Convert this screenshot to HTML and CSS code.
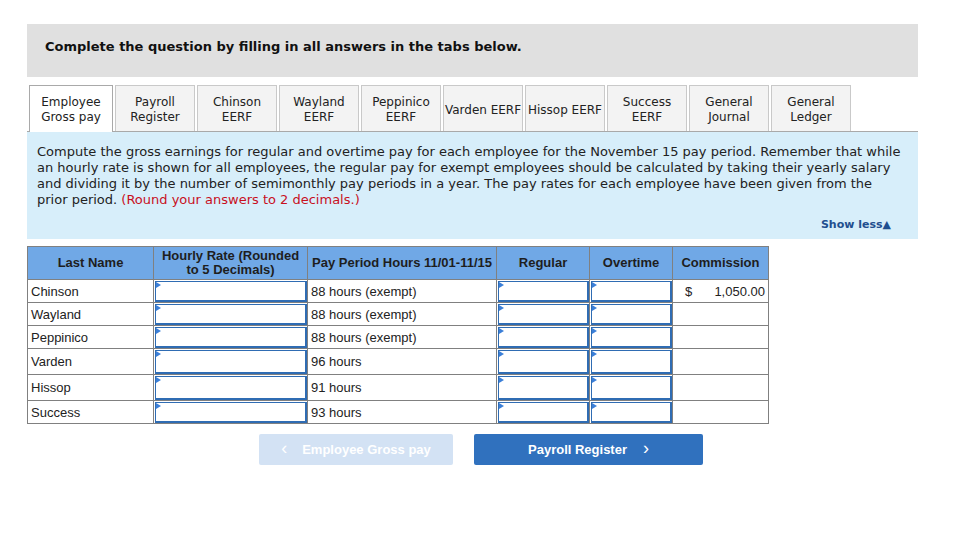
FILE: index.html
```html
<!DOCTYPE html>
<html>
<head>
<meta charset="utf-8">
<link rel="stylesheet" href="styles.css">
</head>
<body>
<div class="page">
  <div class="banner">Complete the question by filling in all answers in the tabs below.</div>

  <div class="tabs">
    <div class="tab active first">Employee<br>Gross pay</div>
    <div class="tab">Payroll<br>Register</div>
    <div class="tab">Chinson<br>EERF</div>
    <div class="tab">Wayland<br>EERF</div>
    <div class="tab">Peppinico<br>EERF</div>
    <div class="tab">Varden EERF</div>
    <div class="tab">Hissop EERF</div>
    <div class="tab">Success<br>EERF</div>
    <div class="tab">General<br>Journal</div>
    <div class="tab">General<br>Ledger</div>
  </div>

  <div class="panel">
    <p class="instr">Compute the gross earnings for regular and overtime pay for each employee for the November 15 pay period. Remember that while an hourly rate is shown for all employees, the regular pay for exempt employees should be calculated by taking their yearly salary and dividing it by the number of semimonthly pay periods in a year. The pay rates for each employee have been given from the prior period. <span class="red">(Round your answers to 2 decimals.)</span></p>
    <div class="showless">Show less&#9650;</div>
  </div>

  <table class="grid">
    <colgroup>
      <col class="c1"><col class="c2"><col class="c3"><col class="c4"><col class="c5"><col class="c6">
    </colgroup>
    <thead>
      <tr>
        <th>Last Name</th>
        <th>Hourly Rate (Rounded<br>to 5 Decimals)</th>
        <th>Pay Period Hours 11/01-11/15</th>
        <th>Regular</th>
        <th>Overtime</th>
        <th>Commission</th>
      </tr>
    </thead>
    <tbody>
      <tr class="r23">
        <td class="name">Chinson</td>
        <td class="in"><div class="box"></div></td>
        <td class="txt">88 hours (exempt)</td>
        <td class="in"><div class="box"></div></td>
        <td class="in"><div class="box"></div></td>
        <td class="comm"><div class="money"><span>$</span><span>1,050.00</span></div></td>
      </tr>
      <tr class="r23">
        <td class="name">Wayland</td>
        <td class="in"><div class="box"></div></td>
        <td class="txt">88 hours (exempt)</td>
        <td class="in"><div class="box"></div></td>
        <td class="in"><div class="box"></div></td>
        <td></td>
      </tr>
      <tr class="r23">
        <td class="name">Peppinico</td>
        <td class="in"><div class="box"></div></td>
        <td class="txt">88 hours (exempt)</td>
        <td class="in"><div class="box"></div></td>
        <td class="in"><div class="box"></div></td>
        <td></td>
      </tr>
      <tr class="r26">
        <td class="name">Varden</td>
        <td class="in"><div class="box"></div></td>
        <td class="txt">96 hours</td>
        <td class="in"><div class="box"></div></td>
        <td class="in"><div class="box"></div></td>
        <td></td>
      </tr>
      <tr class="r26">
        <td class="name">Hissop</td>
        <td class="in"><div class="box"></div></td>
        <td class="txt">91 hours</td>
        <td class="in"><div class="box"></div></td>
        <td class="in"><div class="box"></div></td>
        <td></td>
      </tr>
      <tr class="r23">
        <td class="name">Success</td>
        <td class="in"><div class="box"></div></td>
        <td class="txt">93 hours</td>
        <td class="in"><div class="box"></div></td>
        <td class="in"><div class="box"></div></td>
        <td></td>
      </tr>
    </tbody>
  </table>

  <div class="nav">
    <div class="btn prev"><span class="chev">&lsaquo;</span>Employee Gross pay</div>
    <div class="btn next">Payroll Register<span class="chev r">&rsaquo;</span></div>
  </div>
</div>
</body>
</html>
```

FILE: styles.css
```css
html, body {
  margin: 0;
  padding: 0;
  background: #ffffff;
}
.page {
  width: 891px;
  padding: 24px 0 0 27px;
  font-family: "DejaVu Sans", Verdana, sans-serif;
  color: #222;
}
.banner {
  background: #e0e0e0;
  height: 53px;
  box-sizing: border-box;
  padding: 15px 0 0 18px;
  font-size: 13px;
  font-weight: bold;
  color: #111;
}
.tabs {
  margin-top: 8px;
  display: flex;
  gap: 2px;
  padding-left: 2px;
  border-bottom: 1px solid #a9a9a9;
  height: 46px;
}
.tab {
  width: 80px;
  height: 46px;
  box-sizing: border-box;
  background: #f3f3f3;
  border: 1px solid #c9c9c9;
  border-bottom: none;
  font-size: 12px;
  line-height: 15px;
  color: #222;
  text-align: center;
  display: flex;
  align-items: center;
  justify-content: center;
  white-space: nowrap;
  padding-top: 3px;
}
.tab.first {
  width: 84px;
}
.tab.active {
  background: #ffffff;
  border-color: #a9a9a9;
  height: 47px;
  padding-bottom: 1px;
  position: relative;
  z-index: 1;
}
.panel {
  background: #d7eefa;
  height: 107px;
  box-sizing: border-box;
  padding: 12px 14px 0 10px;
}
.instr {
  margin: 0;
  font-size: 13px;
  line-height: 16px;
  color: #222;
}
.red {
  color: #c8101e;
}
.showless {
  text-align: right;
  font-size: 11px;
  font-weight: bold;
  color: #1f4f8f;
  margin-top: 10px;
  padding-right: 13px;
}
.grid {
  margin-top: 7px;
  border-collapse: collapse;
  width: 741px;
  table-layout: fixed;
  font-family: "Liberation Sans", Arial, sans-serif;
  font-size: 13px;
  color: #222;
}
.c1 { width: 126px; }
.c2 { width: 154px; }
.c3 { width: 189px; }
.c4 { width: 93px; }
.c5 { width: 83px; }
.c6 { width: 96px; }
.grid th {
  background: #70a8e6;
  border: 1px solid #808080;
  height: 32px;
  padding: 0;
  font-weight: bold;
  line-height: 14px;
  color: #1e1e1e;
}
.grid td {
  border: 1px solid #808080;
  padding: 0 3px;
  white-space: nowrap;
  line-height: 15px;
}
.grid td.in {
  padding: 1px 0 0 1px;
  vertical-align: top;
}
.box {
  position: relative;
  box-sizing: border-box;
  border-style: solid;
  border-color: #2f6cb3;
  border-width: 1px 2px 2px 1px;
  background: #fff;
  height: 21px;
}
.r26 .box {
  height: 24px;
}
.box::before {
  content: "";
  position: absolute;
  left: 0;
  top: 0;
  width: 0;
  height: 0;
  border-top: 3px solid transparent;
  border-bottom: 3px solid transparent;
  border-left: 5px solid #3b7fd8;
}
.grid td.comm {
  padding: 0 3px 0 12px;
}
.money {
  display: flex;
  justify-content: space-between;
}
.nav {
  margin-top: 10px;
  margin-left: 232px;
  display: flex;
  gap: 21px;
}
.btn {
  height: 31px;
  border-radius: 2px;
  font-family: "Liberation Sans", Arial, sans-serif;
  font-size: 13px;
  font-weight: bold;
  color: #fff;
  display: flex;
  align-items: center;
  justify-content: center;
}
.prev {
  width: 194px;
  background: #d3e2f4;
}
.next {
  width: 229px;
  background: #3071be;
}
.chev {
  font-size: 18px;
  font-weight: normal;
  margin-right: 15px;
  position: relative;
  top: -1px;
}
.chev.r {
  margin-right: 0;
  margin-left: 16px;
}
```
